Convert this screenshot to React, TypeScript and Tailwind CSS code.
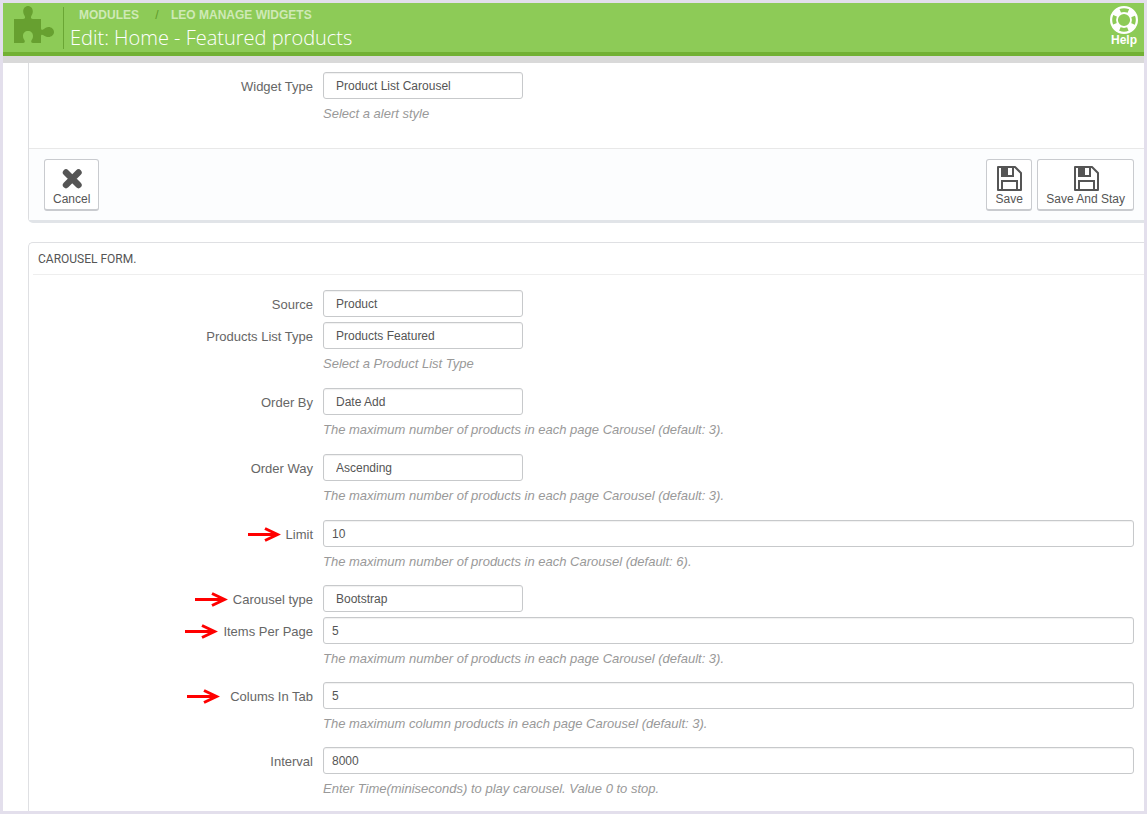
import { useId } from "react";
import type { ReactNode } from "react";

type Field = {
  label: string;
  value: string;
  kind: "select" | "text";
  hint?: string;
  arrow?: "near" | "far";
};

const PAGE_HINT = "The maximum number of products in each page Carousel (default: 3).";

const fields: Field[] = [
  { label: "Source", value: "Product", kind: "select" },
  {
    label: "Products List Type",
    value: "Products Featured",
    kind: "select",
    hint: "Select a Product List Type",
  },
  { label: "Order By", value: "Date Add", kind: "select", hint: PAGE_HINT },
  { label: "Order Way", value: "Ascending", kind: "select", hint: PAGE_HINT },
  {
    label: "Limit",
    value: "10",
    kind: "text",
    hint: "The maximum number of products in each Carousel (default: 6).",
    arrow: "near",
  },
  { label: "Carousel type", value: "Bootstrap", kind: "select", arrow: "near" },
  { label: "Items Per Page", value: "5", kind: "text", hint: PAGE_HINT, arrow: "near" },
  {
    label: "Colums In Tab",
    value: "5",
    kind: "text",
    hint: "The maximum column products in each page Carousel (default: 3).",
    arrow: "far",
  },
  {
    label: "Interval",
    value: "8000",
    kind: "text",
    hint: "Enter Time(miniseconds) to play carousel. Value 0 to stop.",
  },
];

export default function App() {
  return (
    <div className="flex min-h-screen flex-col border-[3px] border-[#e3dfec] bg-white font-['Liberation_Sans',Arial,sans-serif] text-[#555]">
      <Header />

      <main className="flex flex-1 flex-col pl-[25px]">
        <section className="rounded-bl-[5px] border-b-[3px] border-l border-b-[#e1e4e8] border-l-[#dcdde0]">
          <div className="pt-[9px] pb-[13px]">
            <FormRow
              label="Widget Type"
              value="Product List Carousel"
              kind="select"
              hint="Select a alert style"
            />
          </div>
          <div className="flex gap-[5px] border-t border-[#e8e8e8] bg-[#fcfdfe] pt-[10px] pr-[10px] pb-[9px] pl-[15px]">
            <ToolButton label="Cancel" icon={<CrossIcon />} />
            <span className="flex-1" />
            <ToolButton label="Save" icon={<FloppyIcon />} />
            <ToolButton label="Save And Stay" icon={<FloppyIcon />} />
          </div>
        </section>

        <section className="mt-[19px] flex-1 rounded-tl-[5px] border-t border-l border-[#dfe0e3]">
          <h3 className="ml-1 border-b border-[#eee] pt-[2px] pl-[5px] font-[Roboto,sans-serif] text-[12px] leading-[29px]">
            CAROUSEL FORM.
          </h3>
          <form className="pt-[15px]">
            {fields.map((field) => (
              <FormRow key={field.label} {...field} />
            ))}
          </form>
        </section>
      </main>
    </div>
  );
}

function Header() {
  return (
    <header className="flex h-[60px] border-b-[7px] border-[#d9d9d9]">
      <div className="flex flex-1 items-start border-b-4 border-[#72b134] bg-[#8dcb57]">
        <PuzzleIcon />
        <div className="mt-1 ml-[9px] h-[42px] border-l border-[#6aa634] pl-[6px]">
          <nav className="flex pl-[9px] text-[12px] leading-4 font-bold text-[#cfe9b6]">
            <a href="#modules">MODULES</a>
            <span className="w-[32px] pl-1 text-center font-normal text-[#5f9a2c]">/</span>
            <a href="#widgets">LEO MANAGE WIDGETS</a>
          </nav>
          <h1 className="font-['Open_Sans',sans-serif] text-[20px] leading-[30px] font-light text-white">
            Edit: Home - Featured products
          </h1>
        </div>
        <a
          href="#help"
          className="mt-[3px] mr-[6px] ml-auto flex flex-col items-center text-[12px] leading-3 font-bold text-white"
        >
          <LifeRingIcon />
          Help
        </a>
      </div>
    </header>
  );
}

function FormRow({ label, value, kind, hint, arrow }: Field) {
  const id = useId();

  return (
    <div className="flex pr-[10px] pb-[3px] last:pb-0">
      <div className="flex w-[284px] shrink-0 items-center justify-end self-start text-[13px] leading-[29px] text-[#666]">
        {arrow && <RedArrow far={arrow === "far"} />}
        <label htmlFor={id}>{label}</label>
      </div>
      <div className="ml-[10px] min-w-0 flex-1">
        {kind === "select" ? (
          <select
            id={id}
            defaultValue={value}
            className="block h-[27px] w-[200px] appearance-none rounded-[3px] border border-[#c7c9cb] bg-white px-3 text-[12px] shadow-[inset_0_1px_1px_rgba(0,0,0,0.06)]"
          >
            <option>{value}</option>
          </select>
        ) : (
          <input
            id={id}
            type="text"
            defaultValue={value}
            className="block h-[27px] w-full rounded-[3px] border border-[#c7c9cb] bg-white px-2 text-[12px] shadow-[inset_0_1px_1px_rgba(0,0,0,0.06)]"
          />
        )}
        {hint && (
          <p
            className={
              kind === "select"
                ? "pt-[6px] pb-[12px] text-[13px] leading-[18px] text-[#999] italic"
                : "pt-[6px] pb-[11px] text-[13px] leading-[18px] text-[#999] italic"
            }
          >
            {hint}
          </p>
        )}
      </div>
    </div>
  );
}

function ToolButton({ label, icon }: { label: string; icon: ReactNode }) {
  return (
    <button
      type="button"
      className="flex h-[52px] flex-col items-center rounded-[3px] border border-b-2 border-[#c9cbcf] bg-white px-2 pt-[4px] text-[12px] leading-[15px]"
    >
      {icon}
      {label}
    </button>
  );
}

function RedArrow({ far }: { far: boolean }) {
  return (
    <svg
      viewBox="0 0 33 15"
      className={far ? "mr-[10px] h-[15px] w-[33px]" : "mr-[5px] h-[15px] w-[33px]"}
      fill="none"
      stroke="#f00"
      strokeWidth="3"
    >
      <path d="M0 7.500H28" />
      <path d="M17 1.500L29.500 7.500L17 13.500" />
    </svg>
  );
}

function PuzzleIcon() {
  return (
    <svg viewBox="0 0 40 37" className="mt-[3px] ml-[11px] h-[37px] w-[40px]" fill="#67a030">
      <path d="M0 13H9C10.800 13 11.500 11.600 10.800 10.200C10 8.800 9.200 7.500 9.200 5.300C9.200 2.300 11.300 0 14 0S18.800 2.300 18.800 5.300C18.800 7.500 18 8.800 17.200 10.200C16.500 11.600 17.200 13 19 13H27V22C27 24 28.200 24.200 29.500 23.300C31 22.300 32.500 21 34.500 21C37.500 21 40 23.200 40 26S37.500 31 34.500 31C32.500 31 31 30.200 29.500 29.200C28.200 28.300 27 28.500 27 30V37H19C17.300 37 16.800 35.500 17.500 34.200C18.500 32.900 19 31.800 19 30C19 27 17 25 14 25S9 27 9 30C9 31.800 9.500 32.900 10.500 34.200C11.200 35.500 10.700 37 9 37H0Z" />
    </svg>
  );
}

function LifeRingIcon() {
  return (
    <svg viewBox="0 0 28 28" className="size-[28px]" fill="none" stroke="#fff">
      <circle cx="14" cy="14" r="12.900" strokeWidth="2.200" />
      <circle cx="14" cy="14" r="7" strokeWidth="1.800" />
      {/* solid wedges on the diagonals */}
      <circle
        cx="14"
        cy="14"
        r="10"
        strokeWidth="6"
        strokeDasharray="7.4 8.308"
        strokeDashoffset="-4.154"
      />
    </svg>
  );
}

function CrossIcon() {
  return (
    <svg viewBox="0 0 28 28" className="size-[28px]" stroke="#555" strokeWidth="6.400" strokeLinecap="round">
      <path d="M8 8.500L20.500 21M20.500 8.500L8 21" />
    </svg>
  );
}

function FloppyIcon() {
  return (
    <svg viewBox="0 0 28 28" className="size-[28px]" fill="none" stroke="#555" strokeWidth="2">
      <path d="M3 3H20L26 9V26H3Z" strokeLinejoin="round" />
      <path d="M7 3V12H18V3" />
      <path d="M7 26V17H22V26" />
      <path d="M8 4H13V11H8Z" fill="#555" stroke="none" />
    </svg>
  );
}
